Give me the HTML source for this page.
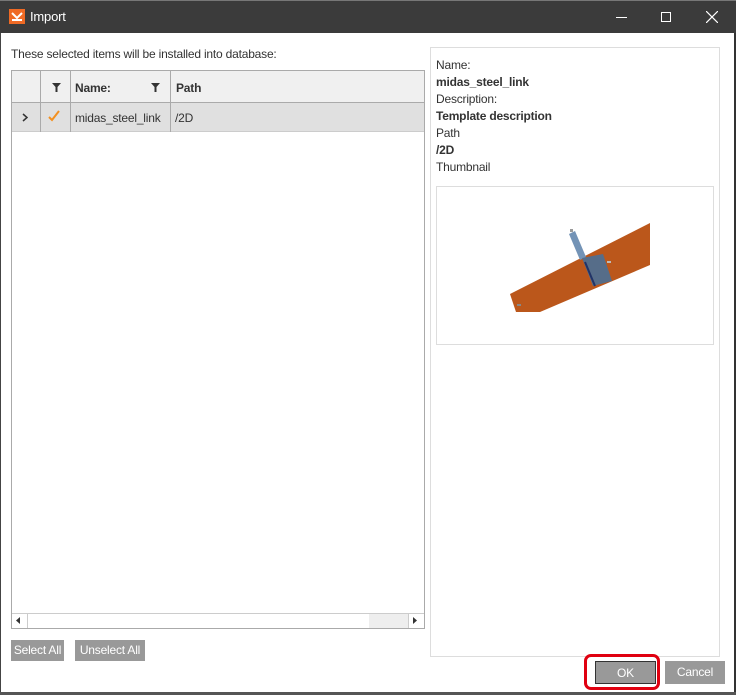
<!DOCTYPE html>
<html><head><style>
*{margin:0;padding:0;box-sizing:border-box}
body{width:736px;height:695px;background:#fff;font-family:"Liberation Sans",sans-serif;font-size:12px;color:#333;position:relative;overflow:hidden;letter-spacing:-0.2px}
.a{position:absolute}
.tb{left:0;top:0;width:736px;height:33px;background:#3b3b3b;border-top:1px solid #777}
.btn{background:#999;color:#fff;text-align:center;font-size:12px}
</style></head><body>
<div class="a tb">
  <div class="a" style="left:9px;top:8px;width:16px;height:15px;background:#ef6a25"></div>
  <svg class="a" style="left:9px;top:8px" width="16" height="15"><path d="M3 4 L8 9 L13 4" stroke="#fff" stroke-width="2" fill="none"/><rect x="3" y="10" width="10" height="2" fill="#fff"/></svg>
  <div class="a" style="left:30px;top:8px;color:#fff;font-size:13px">Import</div>
  <div class="a" style="left:616px;top:16px;width:11px;height:1px;background:#fff"></div>
  <div class="a" style="left:661px;top:11px;width:10px;height:10px;border:1px solid #fff"></div>
  <svg class="a" style="left:706px;top:10px" width="12" height="12"><path d="M0 0L12 12M12 0L0 12" stroke="#fff" stroke-width="1.2"/></svg>
</div>
<div class="a" style="left:0;top:33px;width:1px;height:662px;background:#444"></div>
<div class="a" style="left:734px;top:33px;width:2px;height:662px;background:#333"></div>
<div class="a" style="left:0;top:692px;width:736px;height:3px;background:#555"></div>
<div class="a" style="left:11px;top:47px">These selected items will be installed into database:</div>
<div class="a" style="left:11px;top:70px;width:414px;height:559px;border:1px solid #aaa"></div>
<div class="a" style="left:12px;top:71px;width:412px;height:32px;background:#f0f0f0;border-bottom:1px solid #aaa"></div>
<div class="a" style="left:12px;top:103px;width:412px;height:29px;background:#e0e0e0;border-bottom:1px solid #ccc"></div>
<div class="a" style="left:40px;top:71px;width:1px;height:61px;background:#aaa"></div>
<div class="a" style="left:70px;top:71px;width:1px;height:61px;background:#aaa"></div>
<div class="a" style="left:170px;top:71px;width:1px;height:61px;background:#aaa"></div>
<svg class="a" style="left:52px;top:83px" width="9" height="9"><path d="M0 0H9L5.5 4V9H3.5V4Z" fill="#333"/></svg>
<div class="a" style="left:75px;top:81px;font-weight:bold">Name:</div>
<svg class="a" style="left:151px;top:83px" width="9" height="9"><path d="M0 0H9L5.5 4V9H3.5V4Z" fill="#333"/></svg>
<div class="a" style="left:176px;top:81px;font-weight:bold">Path</div>
<svg class="a" style="left:22px;top:113px" width="6" height="9"><path d="M1 1L5 4.5L1 8" stroke="#333" stroke-width="1.5" fill="none"/></svg>
<svg class="a" style="left:47px;top:110px" width="14" height="12"><path d="M2 7L5 10L12 1" stroke="#f39020" stroke-width="2" fill="none"/></svg>
<div class="a" style="left:75px;top:111px">midas_steel_link</div>
<div class="a" style="left:175px;top:111px">/2D</div>
<div class="a" style="left:12px;top:613px;width:412px;height:15px;background:#fff;border-top:1px solid #ccc"></div>
<div class="a" style="left:27px;top:613px;width:1px;height:15px;background:#ccc"></div>
<div class="a" style="left:369px;top:614px;width:39px;height:14px;background:#eee"></div>
<div class="a" style="left:408px;top:613px;width:1px;height:15px;background:#ccc"></div>
<svg class="a" style="left:16px;top:617px" width="5" height="7"><path d="M4 0V7L0 3.5Z" fill="#333"/></svg>
<svg class="a" style="left:413px;top:617px" width="5" height="7"><path d="M0 0V7L4 3.5Z" fill="#333"/></svg>
<div class="a btn" style="left:11px;top:640px;width:53px;height:21px;line-height:21px">Select All</div>
<div class="a btn" style="left:75px;top:640px;width:70px;height:21px;line-height:21px">Unselect All</div>
<div class="a" style="left:430px;top:47px;width:290px;height:610px;border:1px solid #ddd"></div>
<div class="a" style="left:436px;top:57px;line-height:17px">Name:<br><b>midas_steel_link</b></div>
<div class="a" style="left:436px;top:91px;line-height:17px">Description:<br><b>Template description</b></div>
<div class="a" style="left:436px;top:125px;line-height:17px">Path<br><b>/2D</b></div>
<div class="a" style="left:436px;top:160px">Thumbnail</div>
<div class="a" style="left:436px;top:186px;width:278px;height:159px;border:1px solid #ddd"></div>
<svg class="a" style="left:437px;top:187px" width="276" height="157">
 <path d="M73 107L213 36V78L103 125H79Z" fill="#bb571b"/>
 <path d="M132 47L138 44L149 70L143 73Z" fill="#7393b6"/>
 <path d="M145 71L166 67L175 94L156 99Z" fill="#566d89"/>
 <path d="M148 75L158 99" stroke="#223366" stroke-width="2"/>
 <rect x="170" y="74" width="4" height="2" fill="#bbb"/>
 <rect x="80" y="117" width="4" height="2" fill="#888"/>
 <rect x="133" y="42" width="3" height="3" fill="#999"/>
</svg>
<div class="a" style="left:584px;top:654px;width:76px;height:36px;border:3px solid #e00010;border-radius:7px"></div>
<div class="a btn" style="left:595px;top:661px;width:61px;height:23px;line-height:23px;border:1px solid #333">OK</div>
<div class="a btn" style="left:665px;top:661px;width:60px;height:23px;line-height:23px">Cancel</div>
</body></html>
